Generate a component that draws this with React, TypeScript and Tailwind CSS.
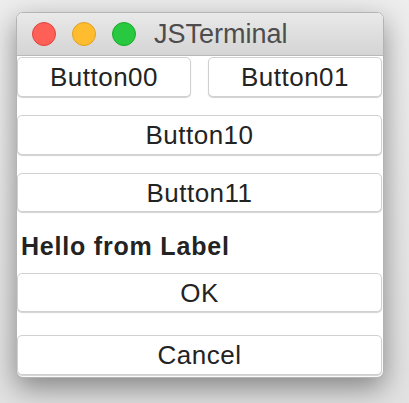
import React from 'react';

const font = { fontFamily: '"Liberation Sans", Arial, sans-serif' };

const Btn: React.FC<{ label: string; className?: string }> = ({ label, className = '' }) => (
    <button
        className={`flex items-center justify-center bg-white border border-[#d0d0d0] rounded-[5px] shadow-[0_1px_1px_rgba(0,0,0,0.18)] text-[26px] leading-none tracking-[0.5px] text-[#232323] ${className}`}
    >
        {label}
    </button>
);

const App: React.FC = () => {
    return (
        <div
            className="w-[409px] h-[403px] bg-gradient-to-b from-[#ededed] to-[#e2e2e2] pt-[12px] pl-[16px]"
            style={font}
        >
            <div className="w-[368px] h-[366px] flex flex-col bg-white border border-[#b4b4b4] rounded-[7px] overflow-hidden shadow-[0_10px_28px_rgba(0,0,0,0.42)]">
                <div className="h-[43px] shrink-0 flex items-center bg-gradient-to-b from-[#e9e9e9] to-[#d4d4d4] border-b border-[#b9b9b9] pl-[15px]">
                    <span className="w-[24px] h-[24px] rounded-full bg-[#fe5f57] border border-[#e0443e]" />
                    <span className="w-[24px] h-[24px] rounded-full bg-[#febc2e] border border-[#dea123] ml-[16px]" />
                    <span className="w-[24px] h-[24px] rounded-full bg-[#28c840] border border-[#1aab29] ml-[16px]" />
                    <span className="ml-[18px] text-[27px] leading-none text-[#4d4d4d]">JSTerminal</span>
                </div>

                <div className="flex flex-col pr-[1px]">
                    <div className="flex justify-between mt-[1px]">
                        <Btn label="Button00" className="w-[174px] h-[40px]" />
                        <Btn label="Button01" className="w-[174px] h-[40px]" />
                    </div>
                    <Btn label="Button10" className="w-full h-[40px] mt-[18px]" />
                    <Btn label="Button11" className="w-full h-[39px] mt-[18px]" />
                    <div className="mt-[22px] h-[25px] pl-[4px] text-[25px] font-bold leading-none tracking-[0.8px] text-[#232323]">
                        Hello from Label
                    </div>
                    <Btn label="OK" className="w-full h-[39px] mt-[14px]" />
                    <Btn label="Cancel" className="w-full h-[40px] mt-[23px]" />
                </div>
            </div>
        </div>
    );
};

export default App;
